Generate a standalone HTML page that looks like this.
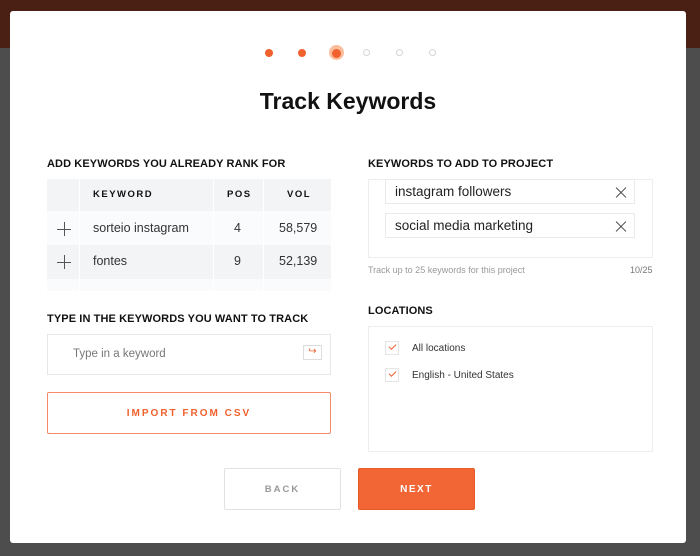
<!DOCTYPE html>
<html><head><style>
*{margin:0;padding:0;box-sizing:border-box}
body{width:700px;height:556px;background:#4d4d4d;position:relative;overflow:hidden;font-family:"Liberation Sans",sans-serif;color:#222}
.top{position:absolute;left:0;top:0;width:700px;height:48px;background:#4a1f14}
.modal{position:absolute;left:10px;top:11px;width:676px;height:532px;background:#fff;border-radius:3px}
.a{position:absolute}
.dot{position:absolute;width:8px;height:8px;border-radius:50%;background:#f0612e}
.odot{position:absolute;width:7px;height:7px;border-radius:50%;border:1.5px solid #d5d5d5}
h1{position:absolute;left:0;width:676px;top:77px;text-align:center;font-size:23px;font-weight:bold;color:#111}
.lbl{position:absolute;font-size:11px;font-weight:bold;color:#111;letter-spacing:0.1px}
.th{font-size:9.5px;font-weight:bold;letter-spacing:1.5px;color:#111}
.cell{position:absolute;font-size:12.5px;color:#333}
.plus{position:absolute;width:14px;height:14px}
.plus:before{content:"";position:absolute;left:0;top:6.5px;width:14px;height:1px;background:#555}
.plus:after{content:"";position:absolute;left:6.5px;top:0;width:1px;height:14px;background:#555}
.tag{position:absolute;left:375px;width:250px;height:25px;border:1px solid #e8eaed;font-size:13.5px;color:#222;padding:4px 0 0 9px}
.x{position:absolute;right:7px;top:6px;width:12px;height:12px}
.x:before,.x:after{content:"";position:absolute;left:-1px;top:5.5px;width:14px;height:1px;background:#444;transform:rotate(45deg)}
.x:after{transform:rotate(-45deg)}
.cb{position:absolute;left:375px;width:14px;height:14px;border:1px solid #e5e5e5}
.cb:after{content:"";position:absolute;left:3px;top:2px;width:6px;height:3px;border-left:1.5px solid #f0612e;border-bottom:1.5px solid #f0612e;transform:rotate(-45deg)}
.loc{position:absolute;left:402px;font-size:10px;color:#333}
</style></head><body>
<div class="top"></div>
<div class="modal">
<div class="dot" style="left:255px;top:38px"></div>
<div class="dot" style="left:288px;top:38px"></div>
<div class="a" style="left:319px;top:34px;width:15px;height:15px;border-radius:50%;background:#fbbd9c"></div>
<div class="dot" style="left:322px;top:38px;width:9px;height:9px"></div>
<div class="odot" style="left:353px;top:38px"></div>
<div class="odot" style="left:386px;top:38px"></div>
<div class="odot" style="left:419px;top:38px"></div>
<h1>Track Keywords</h1>

<div class="lbl" style="left:37px;top:147px">ADD KEYWORDS YOU ALREADY RANK FOR</div>
<div class="a" style="left:37px;top:168px;width:284px;height:112px;background:#fafbfc;overflow:hidden">
 <div class="a" style="left:0;top:0;width:284px;height:32px;background:#f3f4f6"></div>
 <div class="a" style="left:0;top:66px;width:284px;height:34px;background:#f3f4f6"></div>
 <div class="a" style="left:32px;top:0;width:1px;height:112px;background:#fff"></div>
 <div class="a" style="left:166px;top:0;width:1px;height:112px;background:#fff"></div>
 <div class="a" style="left:216px;top:0;width:1px;height:112px;background:#fff"></div>
 <div class="a th" style="left:46px;top:10px">KEYWORD</div>
 <div class="a th" style="left:180px;top:10px">POS</div>
 <div class="a th" style="left:240px;top:10px">VOL</div>
 <div class="plus" style="left:10px;top:43px"></div>
 <div class="cell" style="left:46px;top:42px">sorteio instagram</div>
 <div class="cell" style="left:187px;top:42px">4</div>
 <div class="cell" style="left:232px;top:42px">58,579</div>
 <div class="plus" style="left:10px;top:76px"></div>
 <div class="cell" style="left:46px;top:75px">fontes</div>
 <div class="cell" style="left:187px;top:75px">9</div>
 <div class="cell" style="left:232px;top:75px">52,139</div>
</div>

<div class="lbl" style="left:37px;top:302px">TYPE IN THE KEYWORDS YOU WANT TO TRACK</div>
<div class="a" style="left:37px;top:323px;width:284px;height:41px;border:1px solid #e5e7ea;font-size:11.5px;color:#777;padding:13px 0 0 25px">Type in a keyword
 <div class="a" style="right:8px;top:10px;width:19px;height:15px;border:1px solid #ddd;color:#f0612e;font-size:10px;line-height:12px;text-align:center">↪</div>
</div>
<div class="a" style="left:37px;top:381px;width:284px;height:42px;border:1px solid #f38a6a;border-radius:2px;text-align:center;font-size:10px;font-weight:bold;letter-spacing:2px;color:#f0612e;line-height:41px">IMPORT FROM CSV</div>

<div class="lbl" style="left:358px;top:147px">KEYWORDS TO ADD TO PROJECT</div>
<div class="a" style="left:358px;top:168px;width:285px;height:79px;border:1px solid #eceef1"></div>
<div class="tag" style="top:168px">instagram followers<div class="x"></div></div>
<div class="tag" style="top:202px">social media marketing<div class="x"></div></div>
<div class="a" style="left:358px;top:254px;font-size:9px;color:#999">Track up to 25 keywords for this project</div>
<div class="a" style="left:620px;top:254px;font-size:9px;color:#777">10/25</div>

<div class="lbl" style="left:358px;top:294px">LOCATIONS</div>
<div class="a" style="left:358px;top:315px;width:285px;height:126px;border:1px solid #eceef1"></div>
<div class="cb" style="top:330px"></div><div class="loc" style="top:332px">All locations</div>
<div class="cb" style="top:357px"></div><div class="loc" style="top:359px">English - United States</div>

<div class="a" style="left:214px;top:457px;width:117px;height:42px;border:1px solid #e2e2e2;border-radius:2px;text-align:center;line-height:41px;font-size:9.5px;font-weight:bold;letter-spacing:2px;color:#999">BACK</div>
<div class="a" style="left:348px;top:457px;width:117px;height:42px;background:#f26535;border:1px solid #e85a28;border-radius:2px;text-align:center;line-height:41px;font-size:10px;font-weight:bold;letter-spacing:1.5px;color:#fff">NEXT</div>
</div>
</body></html>
